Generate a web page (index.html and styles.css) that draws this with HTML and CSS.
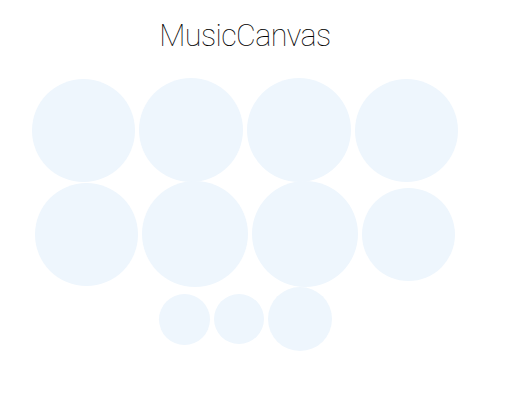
FILE: index.html
```html
<!DOCTYPE html>
<html>
<head>
<meta charset="utf-8">
<link rel="stylesheet" href="styles.css">
</head>
<body>
<div class="app">
  <h1 class="title">MusicCanvas</h1>
  <div class="bubbles">
    <div class="row row-1">
      <div class="bubble" style="--d:103px"></div>
      <div class="bubble" style="--d:104px"></div>
      <div class="bubble" style="--d:104px"></div>
      <div class="bubble" style="--d:103px"></div>
    </div>
    <div class="row row-2">
      <div class="bubble" style="--d:103px"></div>
      <div class="bubble" style="--d:106px"></div>
      <div class="bubble" style="--d:106px"></div>
      <div class="bubble" style="--d:93px"></div>
    </div>
    <div class="row row-3">
      <div class="bubble" style="--d:51px"></div>
      <div class="bubble" style="--d:50px"></div>
      <div class="bubble" style="--d:64px"></div>
    </div>
  </div>
</div>
</body>
</html>
```
FILE: styles.css
```css
html, body {
  margin: 0;
  padding: 0;
  background: #ffffff;
}
.app {
  width: 490px;
  display: flex;
  flex-direction: column;
  align-items: center;
}
.title {
  margin: 19px 0 0 0;
  height: 59px;
  font-family: "Helvetica Neue", Roboto, "Liberation Sans", sans-serif;
  font-weight: 100;
  font-size: 30.5px;
  line-height: 34px;
  letter-spacing: -0.6px;
  color: #000;
}
.bubbles {
  display: flex;
  flex-direction: column;
  align-items: center;
}
.row {
  display: flex;
  align-items: center;
  justify-content: center;
  gap: 4px;
}
.row-2 { margin-top: -1px; }
.bubble {
  width: var(--d);
  height: var(--d);
  border-radius: 50%;
  background: #eef6fd;
  flex: none;
}
```
